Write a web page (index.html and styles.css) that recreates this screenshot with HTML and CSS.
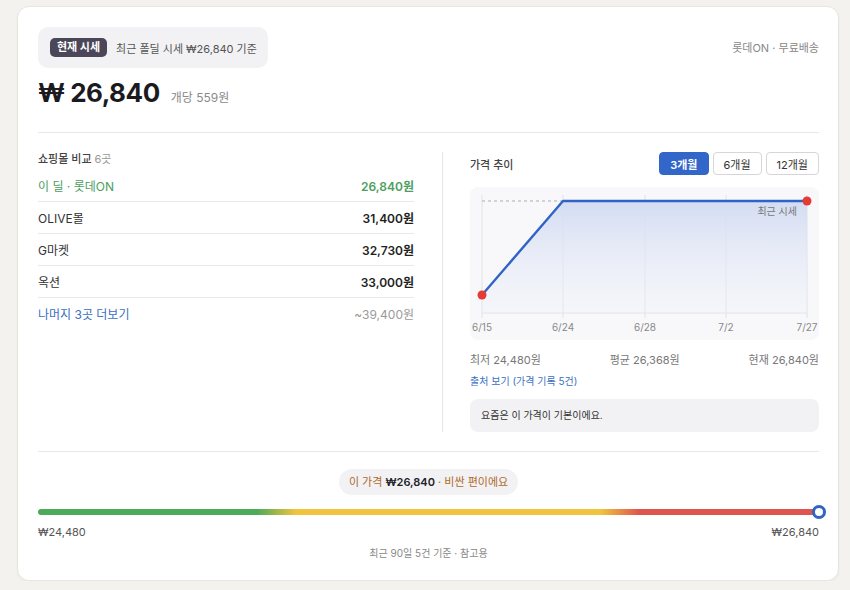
FILE: index.html
```html
<!DOCTYPE html>
<html lang="ko">
<head>
    <meta charset="UTF-8">
    <meta name="viewport" content="width=device-width, initial-scale=1.0">
    <title>가격 비교</title>
    <link rel="stylesheet" href="styles.css">
</head>
<body>
<div class="card">
    <div class="top">
        <div class="now-pill">
            <span class="badge">현재 시세</span>
            <span class="now-text">최근 폴딜 시세 ₩26,840 기준</span>
        </div>
        <div class="seller">롯데ON · 무료배송</div>
    </div>
    <div class="price-row">
        <span class="price">₩ 26,840</span>
        <span class="unit">개당 559원</span>
    </div>

    <div class="middle">
        <div class="malls">
            <div class="malls-title">쇼핑몰 비교 <span class="count">6곳</span></div>
            <div class="mall-row deal">
                <span>이 딜 · 롯데ON</span>
                <span class="mall-price">26,840원</span>
            </div>
            <div class="mall-row">
                <span>OLIVE몰</span>
                <span class="mall-price">31,400원</span>
            </div>
            <div class="mall-row">
                <span>G마켓</span>
                <span class="mall-price">32,730원</span>
            </div>
            <div class="mall-row">
                <span>옥션</span>
                <span class="mall-price">33,000원</span>
            </div>
            <div class="mall-row more">
                <a href="#" class="more-link">나머지 3곳 더보기</a>
                <span class="more-price">~39,400원</span>
            </div>
        </div>

        <div class="trend">
            <div class="trend-head">
                <span class="trend-title">가격 추이</span>
                <div class="ranges">
                    <button class="range active">3개월</button>
                    <button class="range">6개월</button>
                    <button class="range">12개월</button>
                </div>
            </div>
            <div class="chart">
                <svg width="349" height="153" viewBox="0 0 349 153">
                    <defs>
                        <linearGradient id="area" x1="0" y1="0" x2="0" y2="1">
                            <stop offset="0" stop-color="#d3dcf2"/>
                            <stop offset="1" stop-color="#eef1f9" stop-opacity="0.3"/>
                        </linearGradient>
                    </defs>
                    <g stroke="#dfe2e8" stroke-width="1">
                        <line x1="12" y1="8" x2="12" y2="131"/>
                        <line x1="93" y1="8" x2="93" y2="131"/>
                        <line x1="175" y1="8" x2="175" y2="131"/>
                        <line x1="256" y1="8" x2="256" y2="131"/>
                        <line x1="337" y1="8" x2="337" y2="131"/>
                        <line x1="12" y1="126" x2="337" y2="126"/>
                    </g>
                    <polygon points="12,108 93,14 337,14 337,126 12,126" fill="url(#area)"/>
                    <line x1="12" y1="14" x2="337" y2="14" stroke="#a9adb5" stroke-width="1" stroke-dasharray="3 3"/>
                    <polyline points="12,108 93,14 337,14" fill="none" stroke="#3063c6" stroke-width="2.4" stroke-linejoin="round"/>
                    <circle cx="12" cy="108" r="4.5" fill="#e53b35"/>
                    <circle cx="337" cy="14" r="4.5" fill="#e53b35"/>
                    <text x="327" y="28" class="chart-note" text-anchor="end">최근 시세</text>
                    <g class="axis">
                        <text x="12" y="144" text-anchor="middle">6/15</text>
                        <text x="93" y="144" text-anchor="middle">6/24</text>
                        <text x="175" y="144" text-anchor="middle">6/28</text>
                        <text x="256" y="144" text-anchor="middle">7/2</text>
                        <text x="337" y="144" text-anchor="middle">7/27</text>
                    </g>
                </svg>
            </div>
            <div class="stats">
                <span>최저 24,480원</span>
                <span>평균 26,368원</span>
                <span>현재 26,840원</span>
            </div>
            <a href="#" class="source">출처 보기 (가격 기록 5건)</a>
            <div class="note">요즘은 이 가격이 기본이에요.</div>
        </div>
    </div>

    <div class="bottom">
        <div class="verdict">이 가격 <b>₩26,840</b> · 비싼 편이에요</div>
        <div class="meter">
            <div class="meter-bar"></div>
            <span class="meter-dot"></span>
        </div>
        <div class="meter-labels">
            <span>₩24,480</span>
            <span>₩26,840</span>
        </div>
        <div class="footnote">최근 90일 5건 기준 · 참고용</div>
    </div>
</div>
</body>
</html>
```

FILE: styles.css
```css
body {
    margin: 0;
    background-color: #f3f2ee;
    font-family: Inter, "Noto Sans CJK KR", sans-serif;
    color: #222;
}

.card {
    margin: 6px 11px 0 17px;
    background-color: #fff;
    border: 1px solid #e7e6e1;
    border-radius: 12px;
    padding: 20px 19px 20px 20px;
    box-shadow: 0 1px 3px rgba(0, 0, 0, 0.04);
}

/* header */
.top {
    display: flex;
    justify-content: space-between;
    align-items: center;
}

.now-pill {
    display: flex;
    align-items: center;
    gap: 9px;
    background-color: #f2f2f4;
    border-radius: 10px;
    padding: 11px 11px 11px 12px;
}

.badge {
    background-color: #4b4759;
    color: #fff;
    font-size: 11px;
    font-weight: 700;
    line-height: 19px;
    padding: 0 7px;
    border-radius: 5px;
}

.now-text {
    font-size: 11px;
    color: #555;
}

.seller {
    font-size: 11px;
    color: #888;
    margin-top: -2px;
}

.price-row {
    display: flex;
    align-items: baseline;
    gap: 11px;
    margin-top: 8px;
    padding-bottom: 22px;
    border-bottom: 1px solid #e8e8e8;
}

.price {
    font-size: 26px;
    font-weight: 700;
    line-height: 34px;
    color: #1b1b1f;
    letter-spacing: -0.5px;
}

.unit {
    font-size: 12px;
    color: #8a8a8a;
}

/* middle */
.middle {
    display: grid;
    grid-template-columns: 432px 1fr;
    padding: 19px 0 19px;
    border-bottom: 1px solid #e8e8e8;
}

.malls {
    padding-right: 28px;
    border-right: 1px solid #e6e6e6;
    margin-right: 27px;
}

.malls-title {
    font-size: 11px;
    line-height: 14px;
    color: #444;
    font-weight: 500;
    margin-bottom: 4px;
}

.count {
    color: #999;
    font-weight: 400;
}

.mall-row {
    display: flex;
    justify-content: space-between;
    align-items: center;
    height: 31px;
    border-bottom: 1px solid #e9e9ec;
    font-size: 12px;
    color: #333;
}

.mall-price {
    font-weight: 600;
    color: #1f1f1f;
}

.mall-row.deal,
.mall-row.deal .mall-price {
    color: #4b9e5e;
}

.mall-row.more {
    border-bottom: none;
}

.more-link {
    color: #3a70c4;
    text-decoration: none;
}

.more-price {
    color: #9a9a9a;
}

.trend-head {
    display: flex;
    justify-content: space-between;
    align-items: center;
}

.trend-title {
    font-size: 11px;
    font-weight: 500;
    color: #444;
}

.ranges {
    display: flex;
    gap: 4px;
}

.range {
    font-family: inherit;
    font-size: 11px;
    height: 23px;
    padding: 0 10px;
    border: 1px solid #d6d6da;
    border-radius: 4px;
    background-color: #fff;
    color: #333;
}

.range.active {
    background-color: #3366c9;
    border-color: #3366c9;
    color: #fff;
    font-weight: 600;
}

.chart {
    margin-top: 12px;
    background-color: #f8f8fa;
    border-radius: 8px;
    height: 153px;
}

.chart svg {
    display: block;
}

.chart-note {
    font-size: 10px;
    fill: #777;
}

.axis text {
    font-size: 10px;
    fill: #888;
}

.stats {
    display: flex;
    justify-content: space-between;
    margin-top: 12px;
    font-size: 11px;
    line-height: 16px;
    color: #777;
}

.source {
    display: block;
    margin-top: 5px;
    font-size: 10px;
    line-height: 16px;
    color: #3a70c4;
    text-decoration: none;
}

.note {
    margin-top: 10px;
    background-color: #f2f2f4;
    border-radius: 8px;
    padding: 0 11px;
    line-height: 33px;
    font-size: 10px;
    color: #333;
}

/* bottom */
.bottom {
    padding-top: 17px;
}

.verdict {
    width: max-content;
    margin: 0 auto;
    background-color: #f2f2f4;
    border-radius: 13px;
    padding: 0 10px;
    line-height: 26px;
    font-size: 11px;
    color: #b0692a;
}

.verdict b {
    color: #22222a;
    font-weight: 600;
}

.meter {
    position: relative;
    margin-top: 14px;
    height: 6px;
}

.meter-bar {
    height: 6px;
    border-radius: 3px;
    background: linear-gradient(to right, #4caa5a 0%, #4caa5a 28%, #f0c43e 33%, #f0c43e 72%, #e0544f 77%, #e0544f 100%);
}

.meter-dot {
    position: absolute;
    right: -7px;
    top: -4px;
    width: 8px;
    height: 8px;
    border: 3px solid #2f63c6;
    border-radius: 50%;
    background-color: #fff;
}

.meter-labels {
    display: flex;
    justify-content: space-between;
    margin-top: 9px;
    font-size: 11px;
    line-height: 16px;
    color: #555;
}

.footnote {
    margin-top: 6px;
    text-align: center;
    font-size: 10px;
    line-height: 14px;
    color: #888;
}
```
